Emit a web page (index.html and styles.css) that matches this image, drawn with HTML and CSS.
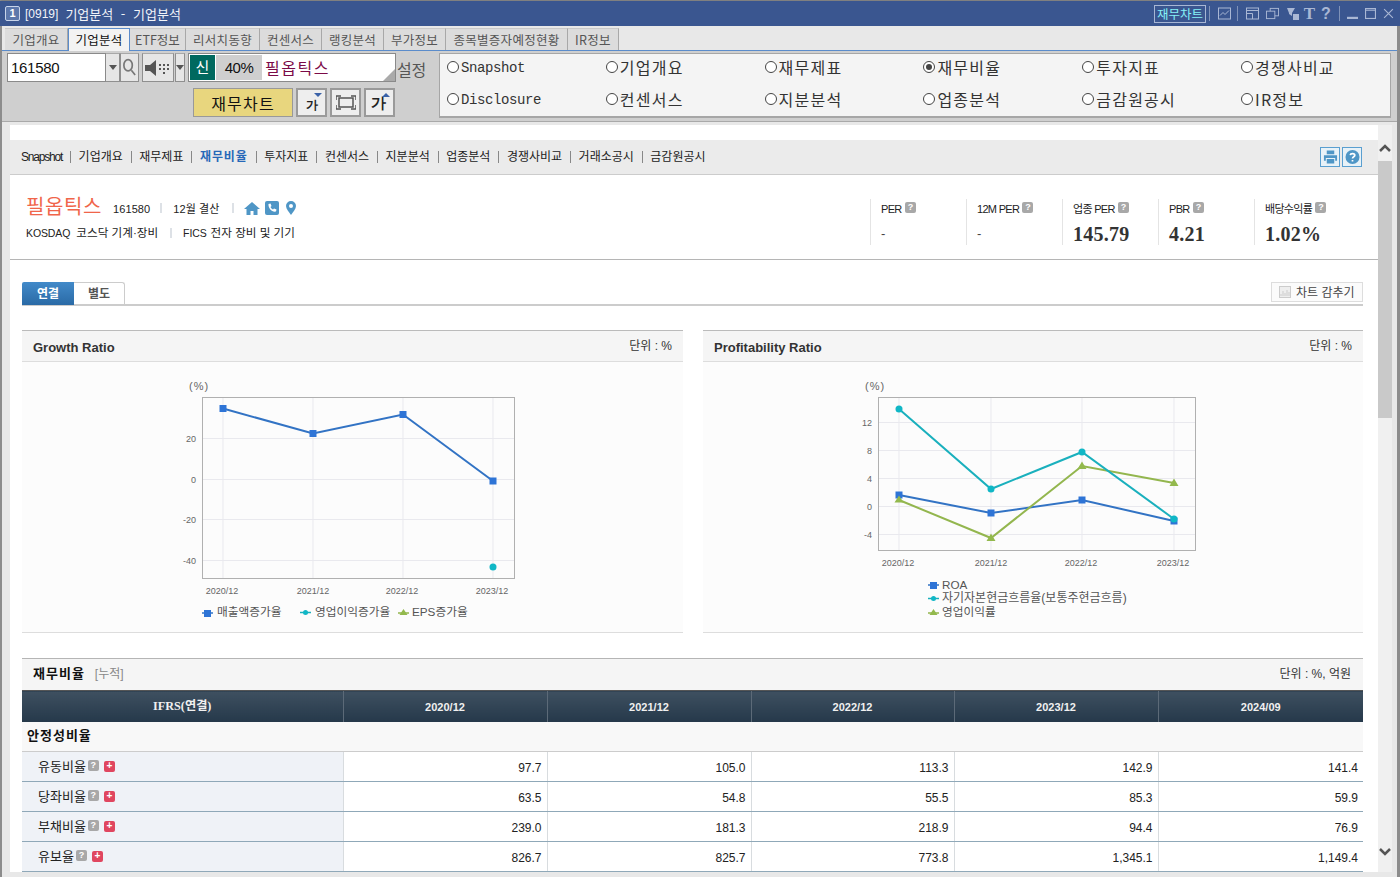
FILE: index.html
```html
<!DOCTYPE html>
<html lang="ko">
<head>
<meta charset="utf-8">
<title>[0919] 기업분석</title>
<link rel="stylesheet" href="styles.css">
</head>
<body>
<div class="window">
  <header class="titlebar">
    <span class="winnum">1</span>
    <span class="tnum">[0919]</span>
    <span class="wintitle">기업분석 - 기업분석</span>
    <div class="wintools">
      <span class="chartlink">재무차트</span>
      <i class="tsep"></i>
      <svg class="ti w13" viewBox="0 0 13 12"><rect x=".5" y=".5" width="12" height="11"/><path d="M2 8l3-3 2 2 4-4"/></svg>
      <i class="tsep s2"></i>
      <svg class="ti w13" viewBox="0 0 13 12"><rect x=".5" y=".5" width="12" height="11"/><path d="M.5 6h6v5.500M.5 3h12" /></svg>
      <svg class="ti w13" viewBox="0 0 14 12"><rect x="4.500" y=".5" width="9" height="8"/><rect x=".5" y="3.500" width="9" height="8" class="fillbar"/></svg>
      <svg class="ti w13 g1" viewBox="0 0 13 13"><path class="solid" d="M1 1h8L6 6v3L3 7V6z"/><rect class="solid" x="7" y="7" width="6" height="6"/></svg>
      <span class="tt">T</span>
      <span class="tq">?</span>
      <i class="tsep s3"></i>
      <svg class="ti w10" viewBox="0 0 10 10"><path class="thick" d="M0 9h10"/></svg>
      <svg class="ti w10 g2" viewBox="0 0 10 10"><rect x=".5" y=".5" width="9" height="9"/><path d="M0 2h10"/></svg>
      <svg class="ti w10 g2" viewBox="0 0 10 10"><path d="M1 1l8 8M9 1l-8 8"/></svg>
    </div>
  </header>

  <nav class="tabs">
    <a class="tab w63">기업개요</a><a class="tab w62 on">기업분석</a><a class="tab w56">ETF정보</a><a class="tab w74">리서치동향</a><a class="tab w62">컨센서스</a><a class="tab w62">랭킹분석</a><a class="tab w62">부가정보</a><a class="tab w122">종목별증자예정현황</a><a class="tab w51">IR정보</a>
  </nav>

  <section class="toolbar">
    <div class="tool-left">
      <div class="tool-row">
        <div class="codebox">161580</div>
        <button class="tb drop"><i class="tri"></i></button>
        <button class="tb search"><svg viewBox="0 0 16 20" class="mag"><ellipse cx="6.500" cy="7.500" rx="4.500" ry="6"/><path d="M10 13l4 5"/></svg></button>
        <button class="tb speak"><svg viewBox="0 0 26 16" class="spk"><path d="M0 5h5l6-5v16l-6-5H0z"/><path d="M14 4h2v2h-2zM18 4h2v2h-2zM22 4h2v2h-2zM14 8h2v2h-2zM18 8h2v2h-2zM22 8h2v2h-2zM18 12h2v2h-2z"/></svg></button>
        <button class="tb drop2"><i class="tri"></i></button>
        <div class="stockbox">
          <span class="sin">신</span><span class="pct">40%</span><span class="sname">필옵틱스</span><i class="corner"></i>
        </div>
        <span class="setting">설정</span>
      </div>
      <div class="tool-row row2">
        <button class="chartbtn">재무차트</button>
        <button class="tb big"><span class="ga">가</span><i class="mini down"></i></button>
        <button class="tb big"><svg viewBox="0 0 20 15" class="fit"><path d="M0 5V1h5M15 1h5v4M20 10v4h-5M5 14H0v-4"/><rect x="3" y="3" width="14" height="9"/></svg></button>
        <button class="tb big"><span class="ga lg">가</span><i class="mini up"></i></button>
      </div>
    </div>
    <div class="radios">
      <label class="radio lat"><i></i>Snapshot</label>
      <label class="radio"><i></i>기업개요</label>
      <label class="radio"><i></i>재무제표</label>
      <label class="radio"><i class="sel"></i>재무비율</label>
      <label class="radio"><i></i>투자지표</label>
      <label class="radio"><i></i>경쟁사비교</label>
      <label class="radio lat"><i></i>Disclosure</label>
      <label class="radio"><i></i>컨센서스</label>
      <label class="radio"><i></i>지분분석</label>
      <label class="radio"><i></i>업종분석</label>
      <label class="radio"><i></i>금감원공시</label>
      <label class="radio"><i></i>IR정보</label>
    </div>
  </section>

  <div class="viewport">
    <main class="page">
      <div class="subnav">
        <a class="sn first">Snapshot</a><a class="sn">기업개요</a><a class="sn">재무제표</a><a class="sn cur">재무비율</a><a class="sn">투자지표</a><a class="sn">컨센서스</a><a class="sn">지분분석</a><a class="sn">업종분석</a><a class="sn">경쟁사비교</a><a class="sn">거래소공시</a><a class="sn">금감원공시</a>
        <div class="subnav-btns">
          <span class="sqbtn"><svg viewBox="0 0 16 14" class="ic"><path d="M4 0h8v4H4zM1 5h14v6h-2V8H3v3H1zM4 9h8v5H4z"/></svg></span>
          <span class="sqbtn"><svg viewBox="0 0 14 14" class="ic"><circle cx="7" cy="7" r="7"/><path class="q" d="M4.700 5.200C5 3 9.300 3 9.300 5.300 9.300 6.800 7 6.800 7 8.500M7 10v1.500"/></svg></span>
        </div>
      </div>

      <div class="company">
        <div class="co-info">
          <div class="co-line1">
            <span class="co-name">필옵틱스</span>
            <span class="co-code">161580</span><i class="cs"></i>
            <span class="co-code">12월 결산</span><i class="cs last"></i>
            <svg class="ci home" viewBox="0 0 16 13"><path d="M8 0L0 7h2.500v6H6.500V9h3v4h4V7H16z"/></svg>
            <svg class="ci" viewBox="0 0 14 14"><rect width="14" height="14" rx="2"/><path class="wh" d="M3.500 3l2-.5 1 2.500-1 1c.5 1.200 1.300 2 2.500 2.500l1-1 2.500 1-.5 2C7 11.500 3 7 3.500 3z"/></svg>
            <svg class="ci pin" viewBox="0 0 10 14"><path fill-rule="evenodd" d="M5 0a5 5 0 0 1 5 5c0 3-3 6-5 9-2-3-5-6-5-9a5 5 0 0 1 5-5zm0 3a2 2 0 1 0 0 4 2 2 0 0 0 0-4z"/></svg>
          </div>
          <div class="co-line2"><span><b class="lt">KOSDAQ</b>코스닥 기계·장비</span><i class="cs"></i><span><b class="lt f">FICS</b>전자 장비 및 기기</span></div>
        </div>
        <div class="stats">
          <div class="stat"><div class="st-l">PER <i class="qm"></i></div><div class="st-d">-</div></div>
          <div class="stat"><div class="st-l">12M PER <i class="qm"></i></div><div class="st-d">-</div></div>
          <div class="stat"><div class="st-l">업종 PER <i class="qm"></i></div><div class="st-v">145.79</div></div>
          <div class="stat"><div class="st-l">PBR <i class="qm"></i></div><div class="st-v">4.21</div></div>
          <div class="stat"><div class="st-l">배당수익률 <i class="qm"></i></div><div class="st-v">1.02%</div></div>
        </div>
      </div>

      <div class="inner">
        <div class="ctabs">
          <a class="ct on">연결</a><a class="ct off">별도</a>
          <span class="hidebtn"><svg viewBox="0 0 12 12" class="hb"><rect x=".5" y=".5" width="11" height="11"/><path d="M2 10V8M4 10V5M6 10V7M8 10V4M10 10V6"/></svg>차트 감추기</span>
        </div>

        <div class="charts">
          <section class="panel left">
            <div class="panel-h"><h3>Growth Ratio</h3><span class="unit">단위 : %</span></div>
            <svg class="chart" viewBox="22 362 661 270">
              <text class="tick pc" x="189" y="390">(%)</text>
              <g class="grid">
                <path d="M223 398V578M313 398V578M403 398V578M493 398V578M203 438.500H514M203 479.500H514M203 519.500H514M203 560.500H514"/>
              </g>
              <rect class="plot" x="202.500" y="397.500" width="312" height="181"/>
              <g class="tick end"><text x="196" y="442">20</text><text x="196" y="483">0</text><text x="196" y="523">-20</text><text x="196" y="564">-40</text></g>
              <g class="tick mid"><text x="222" y="594">2020/12</text><text x="313" y="594">2021/12</text><text x="402" y="594">2022/12</text><text x="492" y="594">2023/12</text></g>
              <polyline class="ln blue" points="223,408.500 313,433.500 403,414.500 493,481"/>
              <g class="mk-blue"><rect x="219.500" y="405" width="7" height="7"/><rect x="309.500" y="430" width="7" height="7"/><rect x="399.500" y="411" width="7" height="7"/><rect x="489.500" y="477.500" width="7" height="7"/></g>
              <circle class="mk-teal" cx="493" cy="567" r="3.500"/>
              <g class="legend">
                <path class="ln blue thin" d="M202 613h11"/><rect class="mk-blue" x="204" y="610" width="7" height="7"/><text x="217" y="616">매출액증가율</text>
                <path class="ln teal thin" d="M300 612.500h11"/><circle class="mk-teal" cx="305.500" cy="612.500" r="2.500"/><text x="315" y="616">영업이익증가율</text>
                <path class="ln green thin" d="M398 613h11"/><path class="mk-green" d="M403.500 609l4 6h-8z"/><text x="412" y="616">EPS증가율</text>
              </g>
            </svg>
          </section>
          <section class="panel right">
            <div class="panel-h"><h3>Profitability Ratio</h3><span class="unit">단위 : %</span></div>
            <svg class="chart" viewBox="703 362 660 270">
              <text class="tick pc" x="865" y="390">(%)</text>
              <g class="grid">
                <path d="M899 398V550M991 398V550M1082 398V550M1174 398V550M879 422.500H1195M879 450.500H1195M879 478.500H1195M879 506.500H1195M879 534.500H1195"/>
              </g>
              <rect class="plot" x="878.500" y="397.500" width="317" height="153"/>
              <g class="tick end"><text x="872" y="426">12</text><text x="872" y="454">8</text><text x="872" y="482">4</text><text x="872" y="510">0</text><text x="872" y="538">-4</text></g>
              <g class="tick mid"><text x="898" y="566">2020/12</text><text x="991" y="566">2021/12</text><text x="1081" y="566">2022/12</text><text x="1173" y="566">2023/12</text></g>
              <polyline class="ln blue" points="899,495 991,513 1082,500 1174,521"/>
              <g class="mk-blue"><rect x="895.500" y="491.500" width="7" height="7"/><rect x="987.500" y="509.500" width="7" height="7"/><rect x="1078.500" y="496.500" width="7" height="7"/><rect x="1170.500" y="517.500" width="7" height="7"/></g>
              <polyline class="ln green" points="899,500 991,538 1082,466 1174,483"/>
              <g class="mk-green"><path d="M899 495.500l4.500 7h-9zM991 533.500l4.500 7.500h-9zM1082 461.500l4.500 7.500h-9zM1174 478.500l4.500 7.500h-9z"/></g>
              <polyline class="ln teal" points="899,409 991,489 1082,452 1174,519"/>
              <g class="mk-teal"><circle cx="899" cy="409" r="3.500"/><circle cx="991" cy="489" r="3.500"/><circle cx="1082" cy="452" r="3.500"/><circle cx="1174" cy="519" r="3.500"/></g>
              <g class="legend">
                <path class="ln blue thin" d="M928 585h11"/><rect class="mk-blue" x="930" y="582" width="7" height="7"/><text x="942" y="589">ROA</text>
                <path class="ln teal thin" d="M928 598.500h11"/><circle class="mk-teal" cx="933.500" cy="598.500" r="2.500"/><text class="long" x="942" y="602">자기자본현금흐름율(보통주현금흐름)</text>
                <path class="ln green thin" d="M928 613h11"/><path class="mk-green" d="M933.500 609l4 6h-8z"/><text x="942" y="616">영업이익률</text>
              </g>
            </svg>
          </section>
        </div>

        <section class="fin">
          <div class="fin-h"><h3>재무비율</h3><span class="cum">[누적]</span><span class="unit">단위 : %, 억원</span></div>
          <table class="grid-t">
            <colgroup><col class="c0"><col class="c1"><col class="c1"><col class="c2"><col class="c1"><col class="c3"></colgroup>
            <thead><tr><th class="th0">IFRS(연결)</th><th>2020/12</th><th>2021/12</th><th>2022/12</th><th>2023/12</th><th>2024/09</th></tr></thead>
            <tbody>
              <tr class="grp"><td colspan="6">안정성비율</td></tr>
              <tr><td class="nm">유동비율<i class="qm"></i><i class="pl">+</i></td><td>97.7</td><td>105.0</td><td>113.3</td><td>142.9</td><td>141.4</td></tr>
              <tr><td class="nm">당좌비율<i class="qm"></i><i class="pl">+</i></td><td>63.5</td><td>54.8</td><td>55.5</td><td>85.3</td><td>59.9</td></tr>
              <tr><td class="nm">부채비율<i class="qm"></i><i class="pl">+</i></td><td>239.0</td><td>181.3</td><td>218.9</td><td>94.4</td><td>76.9</td></tr>
              <tr><td class="nm">유보율<i class="qm"></i><i class="pl">+</i></td><td>826.7</td><td>825.7</td><td>773.8</td><td>1,345.1</td><td>1,149.4</td></tr>
            </tbody>
          </table>
        </section>
      </div>
    </main>
    <aside class="vscroll">
      <svg class="chev top" viewBox="0 0 12 8"><path d="M1 7l5-5 5 5"/></svg>
      <div class="thumb"></div>
      <svg class="chev bot" viewBox="0 0 12 8"><path d="M1 1l5 5 5-5"/></svg>
    </aside>
  </div>
</div>
</body>
</html>
```
FILE: styles.css
```css
* { box-sizing: border-box; }
html, body { margin: 0; padding: 0; }
body {
  width: 1400px; height: 877px; overflow: hidden;
  font-family: "Liberation Sans", "Noto Sans CJK KR", sans-serif;
  font-size: 12px; color: #222; background: #e8e8e8;
}
.window {
  width: 1400px; height: 877px; display: flex; flex-direction: column;
  border-left: 2px solid #8c8c8c; border-right: 3px solid #8c8c8c; border-top: 1px solid #808080;
}
/* Title bar */
.titlebar {
  height: 25px; flex: none; background: #3a5690; color: #fff; display: flex; align-items: center;
  padding: 0 6px 0 5px; margin: 0 -3px 0 -2px; font-family: "Noto Sans CJK KR", sans-serif;
}
.winnum {
  width: 15px; height: 15px; border: 1px solid #c8d4ea; border-radius: 2px; background: #5c77ab;
  font: bold 11px/13px "Liberation Sans", sans-serif; text-align: center; margin-right: 5px;
}
.tnum { font: 12px "Liberation Sans", sans-serif; color: #f2f4f9; margin-right: 7px; }
.wintitle { font-size: 13px; word-spacing: 4px; color: #f2f4f9; }
.wintools { margin-left: auto; display: flex; align-items: center; }
.chartlink {
  width: 52px; height: 18px; border: 1px solid #a7b6d4; color: #86f1f7; font-size: 12.500px; line-height: 15px;
  text-align: center; margin-right: 3px;
}
.tsep { width: 1px; height: 15px; background: #7f92b8; margin: 0 8px 0 0; }
.tsep.s2 { margin: 0 8px 0 -1px; }
.tsep.s3 { margin: 0 7px 0 10px; }
.ti { display: block; fill: none; stroke: #a9b7d4; stroke-width: 1; }
.w13 { width: 13px; height: 13px; margin-right: 7px; }
.w10 { width: 11px; height: 11px; }
.g1 { margin-right: 4px; }
.g2 { margin-left: 7px; }
.solid { fill: #a9b7d4; stroke: none; }
.thick { stroke-width: 2; }
.fillbar { fill: #3a5690; }
.tt { font: bold 17px/16px "Liberation Serif", serif; color: #a9b7d4; width: 13px; margin-right: 5px; text-align: center; }
.tq { font: bold 16px/16px "Liberation Sans", sans-serif; color: #a9b7d4; width: 8px; text-align: center; }

/* Main tabs */
.tabs {
  height: 23px; flex: none; margin-top: 2px; padding-left: 3px; display: flex;
  border-bottom: 1px solid #5b8ccb; font-family: "Noto Sans CJK KR", sans-serif;
}
.tab {
  height: 22px; background: #dcdcdc; color: #555; font-size: 12.500px; line-height: 21px; text-align: center;
  border-right: 1px solid #a8a8a8; border-top: 1px solid #c9c9c9; letter-spacing: .3px;
}
.tab.on { height: 23px; background: #f3f3f3; color: #111; border: 1px solid #5b8ccb; border-bottom: 0; }
.w63 { width: 63px; } .w62 { width: 62px; } .w56 { width: 56px; letter-spacing: 0; } .w74 { width: 74px; } .w122 { width: 122px; } .w51 { width: 51px; }

/* Toolbar */
.toolbar {
  height: 71px; flex: none; background: #cfcfcf; display: flex; padding: 2px 6px 0 5px;
  border-bottom: 1px solid #a9a9a9; margin-bottom: 3px;
  font-family: "Noto Sans CJK KR", sans-serif;
}
.tool-left { width: 433px; flex: none; }
.tool-row { display: flex; height: 29px; align-items: stretch; }
.row2 { margin-top: 6px; padding-left: 186px; }
.codebox {
  width: 99px; background: #fff; border: 1px solid #8a8a8a; font: 15px/27px "Liberation Sans", sans-serif;
  padding-left: 3px; color: #111; letter-spacing: -.3px;
}
.tb {
  padding: 0; margin: 0; background: #e6e6e6; border: 1px solid #8f8f8f; border-top-color: #a8a8a8;
  display: flex; align-items: center; justify-content: center; position: relative;
}
.tri { width: 0; height: 0; border: 4px solid transparent; border-top: 5px solid #555; border-bottom: 0; display: block; }
.drop { width: 14px; border-left: 0; }
.search { width: 19px; margin-right: 3px; }
.speak { width: 32px; margin-right: 1px; }
.drop2 { width: 10px; margin-right: 3px; }
.mag { width: 15px; height: 19px; fill: none; stroke: #777; stroke-width: 1.800; }
.spk { width: 26px; height: 16px; fill: #555; }
.stockbox {
  width: 208px; border: 1px solid #8a8a8a; background: #fff; display: flex; position: relative; padding: 1px;
}
.sin { width: 25px; background: #00695f; color: #fff; font-size: 15px; line-height: 24px; text-align: center; }
.pct { width: 46px; margin-left: 1px; background: #cfcfcf; font: 15px/25px "Liberation Sans", sans-serif; text-align: center; color: #111; letter-spacing: -.5px; }
.sname { color: #7b0a47; font-size: 16px; line-height: 24px; padding-left: 3px; letter-spacing: 1.500px; }
.corner { position: absolute; right: 0; bottom: 0; border: 6px solid transparent; border-right-color: #aaa; border-bottom-color: #aaa; }
.setting { font-size: 16px; line-height: 31px; margin-left: 1px; color: #555; letter-spacing: -.2px; padding-top: 1px; }
.chartbtn {
  width: 100px; padding: 0; background: #e8d67e; border: 1px solid #999; color: #111;
  font: 16px "Noto Sans CJK KR", sans-serif; letter-spacing: 1.200px; margin-right: 3px;
}
.big { width: 31px; margin-right: 3px; background: #eee; border: 2px solid #9a9a9a; }
.ga { font-size: 12px; font-weight: 700; color: #222; padding-top: 6px; }
.ga.lg { font-size: 15px; padding-top: 2px; padding-right: 3px; }
.mini { position: absolute; right: 3px; top: 3px; border: 4px solid transparent; }
.mini.down { border-top: 4px solid #3b62a8; border-bottom: 0; }
.mini.up { border-bottom: 4px solid #3b62a8; border-top: 0; }
.fit { width: 20px; height: 15px; fill: none; stroke: #555; stroke-width: 1.500; }
.radios {
  width: 952px; height: 65px; background: #f4f4f4; border: 1px solid #a6a6a6; border-bottom-width: 2px;
  display: grid; grid-template-columns: repeat(6, 158.800px); grid-template-rows: 26px 26px; row-gap: 6px; padding: 0 0 0 7px;
  margin-left: -1px;
}
.radio { display: flex; align-items: center; font-size: 16px; letter-spacing: 1.250px; color: #333; line-height: 20px; white-space: nowrap; }
.radio.lat { font: 14px/22px "Liberation Mono", monospace; letter-spacing: -.4px; padding-top: 2px; }
.radio.lat i { margin-top: -2px; }
.radio i { width: 12px; height: 12px; border: 1px solid #444; border-radius: 50%; background: #fff; margin-right: 2px; flex: none; display: flex; align-items: center; justify-content: center; }
.radio i.sel::after { content: ""; width: 6px; height: 6px; border-radius: 50%; background: #444; }

/* Content viewport */
.viewport { flex: 1; display: flex; padding-left: 8px; padding-bottom: 5px; min-height: 0; }
.page { width: 1368px; background: #fff; padding-top: 15px; overflow: hidden; }
.vscroll { width: 14px; background: #f0f0f0; position: relative; padding-top: 36px; }
.thumb { height: 257px; background: #c9c9c9; }
.chev { position: absolute; left: 1px; width: 12px; height: 8px; fill: none; stroke: #555; stroke-width: 2.500; }
.chev.top { top: 19px; }
.chev.bot { bottom: 16px; }

.subnav { height: 35px; background: #ebebeb; border-bottom: 1px solid #ccc; display: flex; align-items: center; padding: 0 16px 0 11px; }
.sn { font-size: 12px; line-height: 12px; padding: 0 8px 0 7.500px; border-left: 1px solid #888; color: #222; }
.sn.first { border-left: 0; padding-left: 0; letter-spacing: -1.200px; }
.sn.cur { color: #2668b8; font-weight: 700; letter-spacing: .9px; }
.subnav-btns { margin-left: auto; display: flex; gap: 2px; }
.sqbtn { width: 20px; height: 20px; border: 1px solid #5a9fd0; background: #e8f2f8; display: flex; align-items: center; justify-content: center; }
.ic { width: 15px; height: 14px; fill: #4f96c6; }
.ic .q { fill: none; stroke: #fff; stroke-width: 1.700; }

.company { height: 85px; border-bottom: 1px solid #b5b5b5; display: flex; padding: 0 28px 0 16px; }
.co-info { width: 844px; flex: none; padding-top: 20px; }
.co-line1 { display: flex; align-items: center; height: 22px; }
.co-name { font: 20px/22px "Noto Sans CJK KR", sans-serif; color: #f0654a; letter-spacing: .6px; margin-right: 11px; }
.co-code { font-size: 11px; line-height: 12px; color: #222; padding-top: 5px; letter-spacing: .1px; }
.cs { width: 2px; height: 10px; background: #dde1e6; margin: 4px 11px 0 10px; display: block; }
.cs.last { margin: 4px 10px 0 12px; }
.ci { width: 14px; height: 14px; fill: #4f96c6; margin-right: 5px; margin-top: 4px; }
.ci.home { width: 16px; height: 13px; }
.ci.pin { width: 10px; margin-left: 2px; }
.ci .wh { fill: #fff; }
.co-line2 { display: flex; align-items: center; margin-top: 9px; font-size: 11.600px; line-height: 14px; color: #222; }
.co-line2 .cs { margin: 0 11px 0 12px; }
.lt { font-size: 10.500px; font-weight: 400; letter-spacing: -.1px; margin-right: 6px; }
.lt.f { margin-right: 4px; }
.stats { display: flex; margin-top: 24px; height: 46px; }
.stat { width: 96px; border-left: 1px solid #e4e4e4; padding-left: 10px; overflow: hidden; }
.stat:last-child { width: 100px; }
.st-l { font-size: 11px; line-height: 14px; letter-spacing: -.7px; color: #222; display: flex; align-items: flex-start; gap: 3px; margin-top: 3px; height: 21px; }
.st-d { font-size: 13px; line-height: 22px; color: #444; }
.st-v { font: bold 20px/22px "Liberation Serif", serif; color: #333; letter-spacing: .25px; }
.qm {
  width: 11px; height: 11px; background: #a8a8a8; border-radius: 2px; display: inline-block; position: relative; flex: none; font-style: normal;
}
.qm::after { content: "?"; position: absolute; inset: 0; color: #fff; font: bold 9px/11px "Liberation Sans", sans-serif; text-align: center; }

.inner { padding: 22px 15px 0 12px; }
.ctabs { height: 24px; display: flex; border-bottom: 2px solid #ccc; position: relative; font-family: "Noto Sans CJK KR", sans-serif; }
.ct { width: 52px; height: 23px; font-size: 12px; line-height: 21px; text-align: center; font-weight: 700; }
.ct.on { background: linear-gradient(#428ac9, #2a6aa6); color: #fff; border-radius: 2px 0 0 0; }
.ct.off { width: 51px; color: #555; border: 1px solid #ccc; border-left: 0; border-bottom: 0; border-radius: 0 3px 0 0; line-height: 19px; }
.hidebtn {
  margin-left: auto; width: 92px; height: 20px; border: 1px solid #ddd; background: #fbfbfb; font-size: 12px; line-height: 18px; color: #444;
  display: flex; align-items: center; gap: 5px; padding-left: 7px; white-space: nowrap;
}
.hb { width: 12px; height: 12px; fill: #eee; stroke: #ccc; flex: none; }
.charts { display: flex; gap: 20px; margin-top: 24px; }
.panel { height: 303px; border-top: 1px solid #bbb; border-bottom: 1px solid #ddd; background: #fcfcfc; }
.panel.left { width: 661px; }
.panel.right { width: 660px; }
.panel-h { height: 31px; background: #f5f5f5; border-bottom: 1px solid #ddd; display: flex; justify-content: space-between; padding: 0 11px; }
.panel-h h3 { margin: 0; font: bold 13px/34px "Liberation Sans", "Noto Sans CJK KR", sans-serif; color: #333; }
.unit { font: 12px/30px "Liberation Sans", "Noto Sans CJK KR", sans-serif; color: #333; }
.chart { display: block; width: 100%; height: 270px; font-family: "Liberation Sans", "Noto Sans CJK KR", sans-serif; }
.tick { font-size: 9px; fill: #666; }
.tick.pc { font-size: 11px; letter-spacing: 1px; }
.tick.end { text-anchor: end; }
.tick.mid { text-anchor: middle; }
.grid path { stroke: #e9e9ee; fill: none; stroke-width: 1; }
.plot { fill: none; stroke: #b0b0b0; stroke-width: 1; }
.ln { fill: none; stroke-width: 2; }
.thin { stroke-width: 1.500; }
.blue { stroke: #3273c4; }
.teal { stroke: #1ab0bd; }
.green { stroke: #93b64e; }
.mk-blue { fill: #2e74d6; }
.mk-teal { fill: #10b7c6; }
.mk-green { fill: #93b94d; }
.legend text { font-size: 11.700px; fill: #555; }
.legend text.long { font-size: 12px; }

.fin { margin-top: 25px; }
.fin-h { height: 32px; border-top: 1px solid #b5b5b5; background: #f5f5f5; display: flex; align-items: flex-start; padding: 0 12px 0 11px; }
.fin-h h3 { margin: 0; font: bold 13px/28px "Noto Sans CJK KR", sans-serif; color: #111; letter-spacing: 1px; }
.cum { font-size: 12px; line-height: 30px; margin-left: 10px; color: #888; }
.fin-h .unit { margin-left: auto; }
.grid-t { width: 1341px; border-collapse: collapse; table-layout: fixed; font-size: 12px; }
.c0 { width: 321px; } .c1 { width: 204px; } .c2 { width: 203px; } .c3 { width: 205px; }
.grid-t th {
  height: 31px; background: linear-gradient(#3e5060, #25384a); color: #f0f0f0; font-size: 11px; font-weight: 700; border-left: 1px solid #5c6a78; padding: 2px 0 0; border-top: 1px solid #555;
}
.grid-t th.th0 { font: bold 12.200px "Liberation Serif", "Noto Sans CJK KR", serif; border-left: 0; padding: 0 0 2px; }
.grid-t td {
  height: 30px; text-align: right; padding: 2px 5px 0 0; color: #222; border-bottom: 1px solid #8fa8b8; border-left: 1px solid #d8dcdf;
}
.grid-t tr.grp td { height: 30px; text-align: left; font: bold 13px "Noto Sans CJK KR", sans-serif; letter-spacing: 1px; color: #111; background: #f8f8f8; border-left: 0; border-bottom: 1px solid #ccc; padding: 0 0 4px 5px; }
.grid-t td.nm { text-align: left; background: #eff2f7; padding: 0 0 2px 16px; border-left: 0; font-size: 13px; color: #222; }
.nm .qm { margin-left: 2px; vertical-align: 0; }
.pl {
  width: 11px; height: 11px; background: #e0465f; border-radius: 2px; display: inline-block; margin-left: 5px; color: #fff;
  font: bold 10px/10px "Liberation Sans", sans-serif; text-align: center; vertical-align: 2.500px;
}
```
